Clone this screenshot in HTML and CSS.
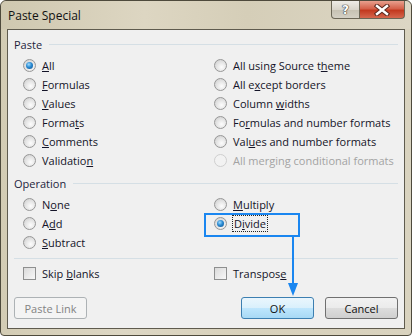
FILE: index.html
```html
<!DOCTYPE html>
<html lang="en">
<head>
  <meta charset="UTF-8">
  <title>Paste Special</title>
  <link rel="stylesheet" href="styles.css">
</head>
<body>
  <div class="window">
    <div class="titlebar">
      <span class="title">Paste Special</span>
      <div class="caption-buttons">
        <div class="cap-btn help">?</div>
        <div class="cap-btn close">
          <svg width="16" height="12" viewBox="0 0 16 12">
            <path d="M3 2 L13 10 M13 2 L3 10" stroke="#5c2a20" stroke-width="4.5" stroke-linecap="square"/>
            <path d="M3 2 L13 10 M13 2 L3 10" stroke="#fff" stroke-width="2.4" stroke-linecap="square"/>
          </svg>
        </div>
      </div>
    </div>

    <div class="client">
      <div class="group-title"><span>Paste</span><i class="rule"></i></div>
      <div class="options">
        <label class="opt"><span class="radio on"></span><span><u>A</u>ll</span></label>
        <label class="opt"><span class="radio"></span><span>All using Source t<u>h</u>eme</span></label>
        <label class="opt"><span class="radio"></span><span><u>F</u>ormulas</span></label>
        <label class="opt"><span class="radio"></span><span>All e<u>x</u>cept borders</span></label>
        <label class="opt"><span class="radio"></span><span><u>V</u>alues</span></label>
        <label class="opt"><span class="radio"></span><span>Column <u>w</u>idths</span></label>
        <label class="opt"><span class="radio"></span><span>Forma<u>t</u>s</span></label>
        <label class="opt"><span class="radio"></span><span>Fo<u>r</u>mulas and number formats</span></label>
        <label class="opt"><span class="radio"></span><span><u>C</u>omments</span></label>
        <label class="opt"><span class="radio"></span><span>Val<u>u</u>es and number formats</span></label>
        <label class="opt"><span class="radio"></span><span>Validatio<u>n</u></span></label>
        <label class="opt disabled"><span class="radio"></span><span>All merging conditional formats</span></label>
      </div>

      <div class="group-title op-title"><span>Operation</span><i class="rule"></i></div>
      <div class="options">
        <label class="opt"><span class="radio"></span><span>N<u>o</u>ne</span></label>
        <label class="opt"><span class="radio"></span><span><u>M</u>ultiply</span></label>
        <label class="opt"><span class="radio"></span><span>A<u>d</u>d</span></label>
        <label class="opt"><span class="radio on"></span><span class="focus">D<u>i</u>vide</span></label>
        <label class="opt"><span class="radio"></span><span><u>S</u>ubtract</span></label>
      </div>

      <div class="separator"></div>

      <div class="options">
        <label class="opt"><span class="check"></span><span>Skip <u>b</u>lanks</span></label>
        <label class="opt"><span class="check"></span><span>Transpos<u>e</u></span></label>
      </div>

      <div class="buttons">
        <button class="btn disabled">Paste Link</button>
        <div class="spacer"></div>
        <button class="btn default">OK</button>
        <button class="btn">Cancel</button>
      </div>
    </div>

    <!-- annotation: highlight box and arrow to OK -->
    <div class="highlight"></div>
    <div class="arrow">
      <svg width="12" height="65" viewBox="0 0 12 65">
        <path d="M6 0 L6 50" stroke="#1a86f0" stroke-width="2"/>
        <path d="M1 48 L11 48 L6 61 Z" fill="#1a86f0"/>
      </svg>
    </div>
  </div>
</body>
</html>
```

FILE: styles.css
```css
body {
  margin: 0;
  background: #fff;
  font-family: "Open Sans", "Noto Sans", sans-serif;
  font-size: 11px;
  color: #1a1a1a;
}
.window {
  position: relative;
  width: 412px;
  height: 336px;
  box-sizing: border-box;
  border: 1px solid #4e4a3c;
  border-radius: 6px 6px 4px 4px;
  background: linear-gradient(90deg, #d3ccb4 0%, #ddd7c4 30%, #d8d1bb 60%, #d9d3bf 100%);
  display: flex;
  flex-direction: column;
}
.titlebar {
  height: 28px;
  display: flex;
  align-items: flex-start;
  justify-content: space-between;
  background: linear-gradient(90deg, #cfc8b0 0%, #ddd6c2 35%, #d5ceb8 60%, #dcd6c4 100%);
  border-radius: 6px 6px 0 0;
}
.title {
  font-size: 12px;
  color: #111;
  margin: 6px 0 0 7px;
}
.caption-buttons {
  display: flex;
  margin-right: 6px;
}
.cap-btn {
  height: 18px;
  box-sizing: border-box;
  border: 1px solid #6b6656;
  border-top: none;
  display: flex;
  align-items: center;
  justify-content: center;
}
.help {
  width: 29px;
  border-radius: 0 0 0 4px;
  background: linear-gradient(#eeece6, #d9d5ca 50%, #c6c1b2 51%, #d4d0c4);
  font-family: "DejaVu Sans", sans-serif;
  font-weight: bold;
  font-size: 12px;
  color: #fff;
  text-shadow: 0 0 1px #333, 0 0 1px #333, 0 0 1px #333;
}
.close {
  width: 45px;
  border-left: none;
  border-radius: 0 0 4px 0;
  background: linear-gradient(#e8a08e, #d4614a 45%, #c2391f 55%, #d5674e);
}
.client {
  flex: 1;
  margin: 0 6px 6px 6px;
  border: 1px solid #5f5b4e;
  background: #f0f0f0;
  padding: 5px 6px 0 6px;
  display: flex;
  flex-direction: column;
}
.group-title {
  display: flex;
  align-items: center;
  height: 19px;
  color: #1e1e3c;
}
.group-title .rule {
  flex: 1;
  height: 1px;
  margin-left: 7px;
  background: #d5dfe5;
}
.op-title {
  margin-top: 4px;
}
.options {
  display: grid;
  grid-template-columns: 191px 1fr;
  padding-left: 9px;
  margin-top: 2px;
}
.opt {
  display: flex;
  align-items: center;
  height: 19px;
  white-space: nowrap;
  color: #141428;
}
.opt u {
  text-underline-offset: 1px;
}
.opt.disabled {
  color: #a3a3a3;
}
.radio {
  width: 11px;
  height: 11px;
  border-radius: 50%;
  border: 1px solid #979797;
  background: radial-gradient(circle at 60% 65%, #fdfdfd 0%, #e4e4e4 50%, #c9c9c9 100%);
  margin-right: 6px;
  position: relative;
  flex: none;
}
.radio.on::after {
  content: "";
  position: absolute;
  left: 2px;
  top: 2px;
  width: 7px;
  height: 7px;
  border-radius: 50%;
  background: radial-gradient(circle at 40% 35%, #9fdcff 0%, #2a8ad2 45%, #0e4f8a 100%);
}
.disabled .radio {
  border-color: #cfcfcf;
  background: #f2f2f2;
}
.check {
  width: 11px;
  height: 11px;
  border: 1px solid #8e8f8f;
  background: linear-gradient(135deg, #dadada, #f8f8f8);
  margin-right: 6px;
  flex: none;
}
.focus {
  outline: 1px dotted #222;
  outline-offset: 0;
  padding: 0 1px;
}
.separator {
  height: 1px;
  background: #d5dfe5;
  margin: 6px 0 3px 0;
}
.buttons {
  display: flex;
  gap: 11px;
  margin-top: 14px;
}
.spacer {
  flex: 1;
}
.btn {
  width: 73px;
  height: 22px;
  border: 1px solid #707070;
  border-radius: 3px;
  background: linear-gradient(#f2f2f2 0%, #ebebeb 50%, #dddddd 51%, #cfcfcf 100%);
  font-family: "Open Sans", "Noto Sans", sans-serif;
  font-size: 11px;
  color: #111;
  padding: 0;
}
.btn.disabled {
  border-color: #adb2b5;
  background: #f4f4f4;
  color: #838383;
}
.btn.default {
  border-color: #3c7fb1;
  background: linear-gradient(#eaf6fd 0%, #d9f0fc 50%, #bee6fd 51%, #a7d9f5 100%);
}
.highlight {
  position: absolute;
  left: 203px;
  top: 212px;
  width: 92px;
  height: 20px;
  border: 2px solid #1a86f0;
}
.arrow {
  position: absolute;
  left: 286px;
  top: 234px;
}
```
